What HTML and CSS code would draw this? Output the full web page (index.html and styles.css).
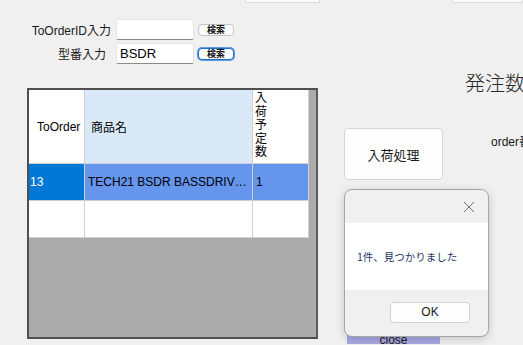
FILE: index.html
```html
<!DOCTYPE html>
<html lang="ja">
<head>
    <meta charset="UTF-8">
    <meta name="viewport" content="width=device-width, initial-scale=1.0">
    <title>入荷処理</title>
    <link rel="stylesheet" href="styles.css">
</head>
<body>
    <div class="strip">
        <span class="stub stub-a"></span>
        <span class="stub stub-b"></span>
    </div>
    <div class="main">
        <div class="left">
            <div class="search">
                <div class="row">
                    <label class="lbl">ToOrderID入力</label>
                    <input class="txt" type="text" value="">
                    <button class="find">検索</button>
                </div>
                <div class="row">
                    <label class="lbl lbl-short">型番入力</label>
                    <input class="txt" type="text" value="BSDR">
                    <button class="find focused">検索</button>
                </div>
            </div>
            <div class="grid">
                <table>
                    <colgroup>
                        <col class="c-id">
                        <col class="c-name">
                        <col class="c-qty">
                    </colgroup>
                    <thead>
                        <tr>
                            <th class="h-id">ToOrder</th>
                            <th class="h-name">商品名</th>
                            <th class="h-qty"><div class="stack">入荷予定数</div></th>
                        </tr>
                    </thead>
                    <tbody>
                        <tr class="sel">
                            <td class="cur">13</td>
                            <td><div class="clip">TECH21 BSDR BASSDRIVER DI</div></td>
                            <td>1</td>
                        </tr>
                        <tr>
                            <td></td>
                            <td></td>
                            <td></td>
                        </tr>
                    </tbody>
                </table>
            </div>
        </div>
        <div class="right">
            <div class="qty-title">発注数</div>
            <div class="action-row">
                <button class="receive">入荷処理</button>
                <span class="order-lbl">order番号</span>
            </div>
            <button class="close-btn">close</button>
        </div>
    </div>

    <!-- message box -->
    <div class="msgbox">
        <div class="msg-head">
            <svg class="msg-x" width="12" height="12" viewBox="0 0 12 12">
                <path d="M1 1 L11 11 M11 1 L1 11" stroke="#6e6e6e" stroke-width="1" fill="none"/>
            </svg>
        </div>
        <div class="msg-body">1件、見つかりました</div>
        <div class="msg-foot">
            <button class="ok">OK</button>
        </div>
    </div>
</body>
</html>
```

FILE: styles.css
```css
body {
    margin: 0;
    width: 523px;
    height: 345px;
    overflow: hidden;
    background-color: #f0f0f0;
    font-family: "Liberation Sans", "Noto Sans CJK JP", sans-serif;
    font-size: 12px;
    color: #000;
    position: relative;
}
.strip {
    display: flex;
    height: 3px;
}
.stub {
    display: block;
    height: 2px;
    background-color: #fbfbfb;
    border: 1px solid #dcdcdc;
    border-top: none;
}
.stub-a {
    margin-left: 245px;
    width: 84px;
}
.stub-b {
    margin-left: 132px;
    width: 80px;
}
.main {
    display: flex;
}
.left {
    width: 344px;
    flex-shrink: 0;
}
.search {
    margin-top: 16px;
    display: flex;
    flex-direction: column;
    gap: 3px;
}
.row {
    display: flex;
    align-items: center;
    height: 21px;
}
.lbl {
    width: 116px;
    padding-right: 5px;
    box-sizing: border-box;
    text-align: right;
    white-space: nowrap;
    color: #1a1a1a;
}
.lbl-short {
    padding-right: 10px;
}
.txt {
    width: 78px;
    height: 21px;
    box-sizing: border-box;
    margin: 0;
    padding: 0 3px;
    border: 1px solid #e3e3e3;
    border-bottom-color: #8a8a8a;
    border-radius: 2px;
    background-color: #fff;
    font-family: "Liberation Sans", sans-serif;
    font-size: 13px;
    color: #000;
}
.find {
    margin-left: 4px;
    width: 36px;
    height: 12px;
    padding: 0;
    border: 1px solid #c4c4c4;
    border-radius: 4px;
    background-color: #fdfdfd;
    font-family: "Noto Sans CJK JP", sans-serif;
    font-size: 9px;
    font-weight: bold;
    line-height: 10px;
    color: #111;
}
.find.focused {
    border: 1px solid #1a73c9;
    box-shadow: 0 0 0 1px #5b9be0;
}
.grid {
    margin-top: 24px;
    margin-left: 27px;
    width: 291px;
    height: 251px;
    box-sizing: border-box;
    border: 2px solid #4f4f4f;
    border-right-color: #5c5c5c;
    background-color: #ababab;
}
table {
    table-layout: fixed;
    border-collapse: separate;
    border-spacing: 0;
    width: 280px;
}
.c-id {
    width: 56px;
}
.c-name {
    width: 168px;
}
.c-qty {
    width: 56px;
}
th, td {
    border-right: 1px solid #cfcfcf;
    border-bottom: 1px solid #cfcfcf;
    font-weight: normal;
    text-align: left;
    padding: 0;
    background-color: #fff;
    white-space: nowrap;
}
thead tr {
    height: 74px;
}
.h-id {
    padding-left: 8px;
}
.h-name {
    background-color: #d9e9f7;
    padding-left: 6px;
}
.h-qty {
    vertical-align: top;
    padding-left: 2px;
}
.stack {
    width: 13px;
    white-space: normal;
    word-break: break-all;
    font-family: "Noto Sans CJK JP", sans-serif;
    font-size: 12px;
    line-height: 13.5px;
}
tbody tr {
    height: 37px;
}
.sel td {
    background-color: #6595ec;
    padding-left: 3px;
}
.sel td.cur {
    background-color: #0078d7;
    color: #fff;
    padding-left: 1px;
}
.clip {
    overflow: hidden;
    text-overflow: ellipsis;
    white-space: nowrap;
    width: 161px;
}
.right {
    display: flex;
    flex-direction: column;
    align-items: flex-start;
}
.qty-title {
    margin-top: 68px;
    margin-left: 121px;
    font-family: "Noto Sans CJK JP", sans-serif;
    font-size: 20px;
    line-height: 24px;
    font-weight: 300;
    color: #2a2a2a;
    white-space: nowrap;
}
.action-row {
    display: flex;
    margin-top: 33px;
}
.receive {
    width: 99px;
    height: 52px;
    border: 1px solid #d6d6d6;
    border-radius: 4px;
    background-color: #fdfdfd;
    font-family: "Noto Sans CJK JP", sans-serif;
    font-size: 13px;
    color: #1a1a1a;
}
.order-lbl {
    margin-left: 48px;
    margin-top: 4px;
    white-space: nowrap;
    color: #1a1a1a;
}
.close-btn {
    margin-top: 153px;
    margin-left: 3px;
    width: 93px;
    height: 11px;
    padding: 0;
    border: none;
    background-color: #a8a8e4;
    font-family: "Liberation Sans", sans-serif;
    font-size: 12px;
    color: #1a1a1a;
    display: flex;
    justify-content: center;
    align-items: flex-start;
    line-height: 14px;
    overflow: visible;
}
.msgbox {
    position: absolute;
    left: 344px;
    top: 189px;
    width: 145px;
    height: 148px;
    box-sizing: border-box;
    border: 1px solid #a6a6a6;
    border-radius: 8px;
    background-color: #f0f0f0;
    box-shadow: 0 2px 8px rgba(0, 0, 0, 0.18);
    overflow: hidden;
    display: flex;
    flex-direction: column;
}
.msg-head {
    height: 33px;
    display: flex;
    justify-content: flex-end;
    align-items: center;
}
.msg-x {
    margin-right: 13px;
    margin-top: 1px;
}
.msg-body {
    height: 67px;
    background-color: #fff;
    display: flex;
    align-items: center;
    padding-left: 12px;
    font-family: "Noto Sans CJK JP", sans-serif;
    font-size: 10.5px;
    color: #1c3564;
}
.msg-foot {
    flex: 1;
    display: flex;
    justify-content: flex-end;
    align-items: flex-start;
    padding-top: 12px;
    padding-right: 18px;
}
.ok {
    width: 80px;
    height: 21px;
    border: 1px solid #d2d2d2;
    border-radius: 4px;
    background-color: #fdfdfd;
    font-family: "Liberation Sans", sans-serif;
    font-size: 12px;
    line-height: 17px;
    color: #1a1a1a;
}
```
